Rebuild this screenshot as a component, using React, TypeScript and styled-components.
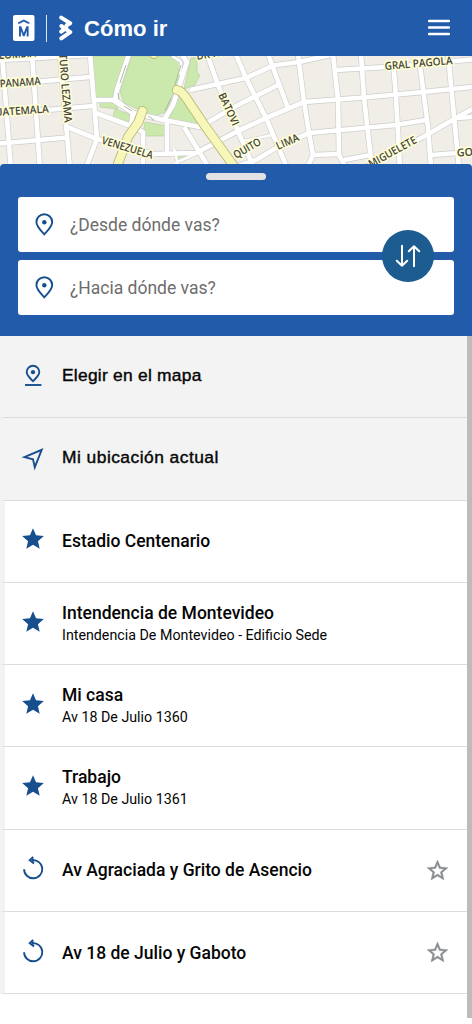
import React from 'react';
import styled, { createGlobalStyle, css } from 'styled-components';

const BLUE = '#215baa';
const NAVY = '#174f8e';

const GlobalStyle = createGlobalStyle`
  * { box-sizing: border-box; }
  body { margin: 0; background: #fff; font-family: Roboto, sans-serif; color: #050505; }
  svg { display: block; flex: none; }
`;

const Screen = styled.div`
  width: 472px;
  height: 1024px;
  overflow: hidden;
  display: flex;
  flex-direction: column;
  background: #fff;
`;

const TopBar = styled.header`
  height: 56px;
  flex: none;
  padding: 0 22px 0 13px;
  display: flex;
  align-items: center;
  background: ${BLUE};
`;

const Divider = styled.span`
  width: 1px;
  height: 27px;
  margin: 0 12px 0 11px;
  background: #dfe8f4;
`;

const Title = styled.h1`
  flex: 1;
  margin: 2px 0 0 11px;
  color: #fff;
  font: bold 22px/28px 'Liberation Sans', sans-serif;
  letter-spacing: 0.05px;
`;

const MenuButton = styled.button`
  border: 0;
  padding: 0;
  margin-top: -1px;
  background: none;
`;

const MapArea = styled.div`
  height: 112px;
  flex: none;
`;

const Sheet = styled.section`
  position: relative;
  height: 172px;
  flex: none;
  margin-top: -4px;
  padding: 9px 18px 0;
  display: flex;
  flex-direction: column;
  align-items: center;
  background: ${BLUE};
  border-radius: 4px 4px 0 0;
`;

const Handle = styled.span`
  width: 60px;
  height: 7px;
  flex: none;
  border-radius: 4px;
  background: #e2e2e4;
`;

const Fields = styled.div`
  width: 100%;
  margin-top: 16.6px;
  display: flex;
  flex-direction: column;
  gap: 8.7px;
`;

const Field = styled.label`
  height: 55px;
  padding: 1px 0 0 17px;
  display: flex;
  align-items: center;
  background: #fff;
  border-radius: 3px;
`;

const Placeholder = styled.span`
  margin-left: 16px;
  font-size: 17.5px;
  line-height: 24px;
  color: #6d6d6d;
`;

const SwapButton = styled.button`
  position: absolute;
  right: 38px;
  top: 66px;
  width: 52px;
  height: 52px;
  padding: 0;
  border: 0;
  border-radius: 50%;
  display: flex;
  align-items: center;
  justify-content: center;
  background: #1c5c91;
`;

const ListArea = styled.div`
  flex: 1;
  display: flex;
`;

const List = styled.ul`
  flex: 1;
  margin: 0;
  padding: 0;
  list-style: none;
`;

const Row = styled.li<{ $action?: boolean }>`
  height: 82.3px;
  padding: 0 17px 0 15px;
  display: flex;
  align-items: center;
  border-bottom: 1px solid #dcdcdc;
  border-left: 5px solid #f3f3f3;
  background: ${p => (p.$action ? '#f3f3f3' : '#fff')};
`;

const Labels = styled.div<{ $double?: boolean }>`
  flex: 1;
  margin-left: 16px;
  margin-bottom: ${p => (p.$double ? '2px' : '0')};
  display: flex;
  flex-direction: column;
`;

const Name = styled.span<{ $action?: boolean; $spacing?: number }>`
  font-size: 17.5px;
  line-height: 24px;
  font-weight: 500;
  ${p =>
    p.$action &&
    css`
      font: 17.4px/24px 'Liberation Sans', sans-serif;
      -webkit-text-stroke: 0.4px #050505;
      margin-top: -4px;
      letter-spacing: ${p.$spacing}px;
    `}
`;

const Address = styled.span`
  font-size: 14.25px;
  line-height: 20px;
`;

const Scrollbar = styled.span`
  width: 5px;
  height: 682px;
  background: #bcbcbc;
`;

const MontevideoLogo = () => (
  <svg width="22" height="26" viewBox="0 0 22 26">
    <rect width="21.5" height="26" rx="2" fill="#fff" />
    <path d="M5 8.7V7.400l5.800-3 5.800 3v1.300l-2.200-.3-3.600-2-3.600 2z" fill={BLUE} />
    <path d="M6 21.600V11.300h2.200l2.600 6.600 2.600-6.600h2.200v10.300h-1.900v-5.800l-2.100 5.400h-1.600l-2.100-5.400v5.800z" fill={BLUE} />
  </svg>
);

const RouteLogo = () => (
  <svg width="14" height="26" viewBox="0 0 14 26" fill="none" stroke="#fff" strokeWidth="4" strokeLinecap="round" strokeLinejoin="round">
    <path d="M2.2 2.6l9 5.600-3.500 2M2.400 11l8.900 6.200-9 6.200M2.200 16.600l5-3.800" />
  </svg>
);

const PinIcon = () => (
  <svg width="19" height="24" viewBox="0 0 19 24" fill="none" stroke={NAVY} strokeWidth="1.9">
    <path d="M9.3 21.3C6.2 18 1.4 13.8 1.4 9.1a7.9 7.9 0 0 1 15.8 0c0 4.7-4.8 8.9-7.9 12.2z" />
    <circle cx="9.3" cy="9.2" r="2.2" fill={NAVY} stroke="none" />
  </svg>
);

const MapPinIcon = () => (
  <svg width="26" height="26" viewBox="0 0 26 26" fill="none" stroke={NAVY} strokeWidth="1.9">
    <path d="M13 18.2C10.5 15.6 6.7 12.8 6.7 9.1a6.3 6.3 0 0 1 12.6 0c0 3.7-3.8 6.5-6.3 9.1z" />
    <circle cx="13" cy="9.2" r="2.1" fill={NAVY} stroke="none" />
    <path d="M5 22h16.4" />
  </svg>
);

const LocateIcon = () => (
  <svg width="26" height="26" viewBox="0 0 26 26" fill="none" stroke={NAVY} strokeWidth="1.9">
    <path d="M4.4 12.1L21.7 4.8 14.8 22.2 13 14.3z" />
  </svg>
);

const StarIcon = () => (
  <svg width="26" height="26" viewBox="0 0 24 24" fill={NAVY}>
    <path d="M12 17.27L18.18 21l-1.64-7.03L22 9.24l-7.19-.61L12 2 9.19 8.63 2 9.24l5.46 4.73L5.82 21z" />
  </svg>
);

const StarOutlineIcon = () => (
  <svg width="25" height="25" viewBox="0 0 24 24" fill="#888c92" stroke="#888c92" strokeWidth=".4">
    <path d="M22 9.24l-7.19-.62L12 2 9.19 8.63 2 9.24l5.46 4.73L5.82 21 12 17.27 18.18 21l-1.63-7.03L22 9.24zM12 15.4l-3.76 2.27 1-4.28-3.32-2.88 4.38-.38L12 6.1l1.71 4.04 4.38.38-3.32 2.88 1 4.28L12 15.4z" />
  </svg>
);

const RecentIcon = () => (
  <svg width="26" height="26" viewBox="0 0 26 26" fill="none" stroke={NAVY} strokeWidth="1.9">
    <path d="M4.1 14.2A9.1 9.1 0 1 0 12 5.2" />
    <path d="M13.2 1.9L9.8 5.2l4.2 3.2" strokeWidth="2" />
    <path d="M12.8 3.5v3.2" />
  </svg>
);

const SwapIcon = () => (
  <svg width="26" height="24" viewBox="0 0 26 24" fill="none" stroke="#fff" strokeWidth="2" strokeLinecap="round" strokeLinejoin="round">
    <path d="M7 1.7v20M1.800 16.8L7 21.7l5.2-4.9M19 22.2v-20M13.8 7.2L19 2.3l5.2 4.9" />
  </svg>
);

const streets = [
  'M0 60L90 55', 'M0 85L90 77', 'M0 114L93 106', 'M0 143.500L67 137.500',
  'M2 54L11 170', 'M32 54L40 170', 'M60 54L70 170', 'M90 54L97 139L85 170',
  'M67 127L97 139L153 154L196 153L240 130L266 118L304 102L364 97.500L423 92L472 87',
  'M95 100H113L133 113L164 120L173 105L187 62L180 52', 'M129 54L117 90L115 100L133 113',
  'M96 113L131 126', 'M133 113L131 126L143 132V168', 'M167 120V153', 'M164 120L200 127L236 106L278 85',
  'M190 90L246 78L273 65.500L299 62L335 54', 'M207 54L218 85L238 131L254 168',
  'M234 50L246 78L266 118L288 170', 'M268 54L288 108', 'M298 54L304 102L309 133L313 155L307 168',
  'M333 54L338 100L339 155L346 168', 'M361 54L364 98L372 168', 'M393 60L396 97L400 168',
  'M419 58L428 127L431 168', 'M448 54L459 168', 'M336 70L386 67L472 59.500',
  'M230 169L256 160L276 148L309 133L396 125L426 120', 'M313 155L339 154', 'M344 160L370 155',
  'M364 168L423 137L456 118L472 109', 'M456 118L472 117', 'M431 155L472 152',
  'M184 127L200 153L209 168',
];

const lanes = ['M175 163L200 152', 'M174 148L178 165', 'M243 141L272 135', 'M172 56L181 62L180 75'];

const parks = [
  'M92 56H126L112 98H95z',
  'M132 56H176L182 65L180 77L166 112L154 116L124 103L120 91z',
  'M191 58H197V72L200 75L195 85L184 89z', 'M179 92L200 120L197 124L168 123z',
  'M100 102L115 103L118 109L100 107z', 'M115 109L131 115L129 122L113 117z',
  'M145 122L167 126V136H143z', 'M176 154L195 153L178 161z', 'M187 126L190 129L188 132L184 128z',
];

const avenues = ['M142.500 111L138.500 122L128 137L115 172', 'M177 90C182 91 184 95 187 99L205 126L238 172'];

const streetNames: [string, number, number, number, number][] = [
  ['COLOMBIA', -14, 60, -4, 50],
  ['PANAMA', 0, 87.5, -4, 41],
  ['GUATEMALA', -12, 116.700, -4, 61],
  ['ARTURO LEZAMA', 58, 41, 85.500, 82],
  ['VENEZUELA', 101, 143.500, 17, 53],
  ['BATOVI', 218, 95, 65, 35],
  ['QUITO', 236, 159, -30, 30],
  ['LIMA', 278, 150, -24, 24],
  ['MIGUELETE', 371, 168, -29, 53],
  ['GRAL PAGOLA', 385, 70, -5, 68],
  ['DR HARRIAGUE', 197, 60, -10, 72],
  ['GOES', 457, 156.500, -3, 28],
];

const CityMap = () => (
  <svg width="472" height="112" viewBox="0 56 472 112">
    <rect y="56" width="472" height="112" fill="#f1eee8" />
    {parks.map(d => <path key={d} d={d} fill="#cbe9ad" stroke="#b5cfa0" strokeWidth=".7" />)}
    <g fill="none" strokeLinejoin="round">
      {lanes.map(d => <path key={d} d={d} stroke="#cdcdcd" strokeWidth="3.600" />)}
      {streets.map(d => <path key={d} d={d} stroke="#cdcdcd" strokeWidth="6" />)}
      {streets.map(d => <path key={d} d={d} stroke="#fff" strokeWidth="4.700" />)}
      {lanes.map(d => <path key={d} d={d} stroke="#fff" strokeWidth="2.500" />)}
    </g>
    <path d="M126 65L120 83M118 93L119 99M124 106L132 111M181 65L174 88M171 98L165 111M148 116L154 120" stroke="#a9bd9c" strokeWidth="1" />
    <g fill="none" strokeLinecap="round">
      {avenues.map(d => <path key={d} d={d} stroke="#b4b66d" strokeWidth="9.800" />)}
      {avenues.map(d => <path key={d} d={d} stroke="#f6f7b9" strokeWidth="8.200" />)}
      <circle cx="154" cy="54" r="4.500" fill="#f6f7b9" stroke="#b4b66d" />
    </g>
    <g fontFamily="Open Sans, sans-serif" fontSize="10.800" fontWeight="600" fill="#444" stroke="#ffffd2" strokeWidth="3.200" strokeLinejoin="round" paintOrder="stroke">
      {streetNames.map(([name, x, y, angle, length]) => (
        <text key={name} transform={`translate(${x} ${y}) rotate(${angle})`} textLength={length} lengthAdjust="spacingAndGlyphs">
          {name}
        </text>
      ))}
    </g>
  </svg>
);

type Kind = 'map' | 'locate' | 'saved' | 'recent';

const icons: Record<Kind, React.FC> = { map: MapPinIcon, locate: LocateIcon, saved: StarIcon, recent: RecentIcon };

const places: { kind: Kind; name: string; address?: string; spacing?: number }[] = [
  { kind: 'map', name: 'Elegir en el mapa', spacing: 0.25 },
  { kind: 'locate', name: 'Mi ubicación actual', spacing: 0.47 },
  { kind: 'saved', name: 'Estadio Centenario' },
  { kind: 'saved', name: 'Intendencia de Montevideo', address: 'Intendencia De Montevideo - Edificio Sede' },
  { kind: 'saved', name: 'Mi casa', address: 'Av 18 De Julio 1360' },
  { kind: 'saved', name: 'Trabajo', address: 'Av 18 De Julio 1361' },
  { kind: 'recent', name: 'Av Agraciada y Grito de Asencio' },
  { kind: 'recent', name: 'Av 18 de Julio y Gaboto' },
];

const IconSlot = styled.span<{ $lift: number }>`
  margin-bottom: ${p => p.$lift}px;
`;

export default function App() {
  return (
    <Screen>
      <GlobalStyle />
      <TopBar>
        <MontevideoLogo />
        <Divider />
        <RouteLogo />
        <Title>Cómo ir</Title>
        <MenuButton aria-label="Menú">
          <svg width="22" height="17" viewBox="0 0 22 17" stroke="#fff" strokeWidth="2.4" strokeLinecap="round">
            <path d="M1 2h20M1 8.500h20M1 15h20" />
          </svg>
        </MenuButton>
      </TopBar>
      <MapArea><CityMap /></MapArea>
      <Sheet>
        <Handle />
        <Fields>
          <Field><PinIcon /><Placeholder>¿Desde dónde vas?</Placeholder></Field>
          <Field><PinIcon /><Placeholder>¿Hacia dónde vas?</Placeholder></Field>
        </Fields>
        <SwapButton aria-label="Intercambiar"><SwapIcon /></SwapButton>
      </Sheet>
      <ListArea>
        <List>
          {places.map(({ kind, name, address, spacing }) => {
            const Icon = icons[kind];
            const action = kind === 'map' || kind === 'locate';
            return (
              <Row key={name} $action={action}>
                <IconSlot $lift={action ? 1 : 4}><Icon /></IconSlot>
                <Labels $double={Boolean(address)}>
                  <Name $action={action} $spacing={spacing}>{name}</Name>
                  {address && <Address>{address}</Address>}
                </Labels>
                {kind === 'recent' && <StarOutlineIcon />}
              </Row>
            );
          })}
        </List>
        <Scrollbar />
      </ListArea>
    </Screen>
  );
}
